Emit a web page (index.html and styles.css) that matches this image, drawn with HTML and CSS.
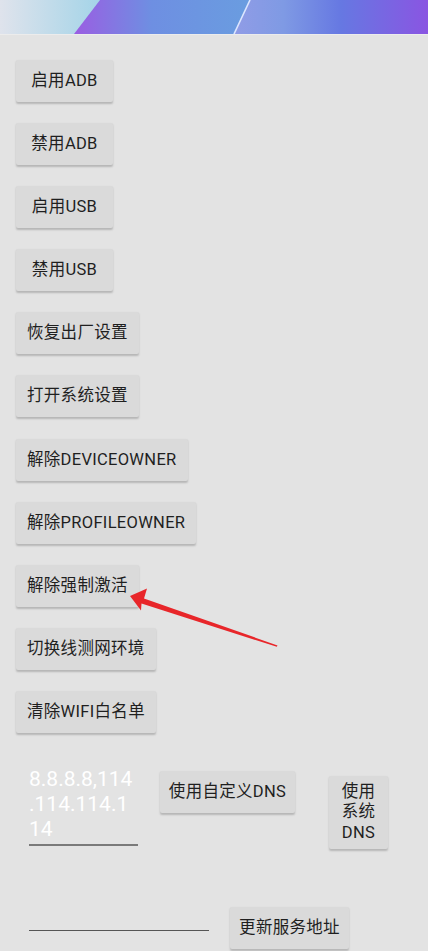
FILE: index.html
```html
<!DOCTYPE html>
<html lang="zh-CN">
<head>
<meta charset="utf-8">
<meta name="viewport" content="width=device-width, initial-scale=1">
<title>设置</title>
<link rel="stylesheet" href="styles.css">
</head>
<body>
<header class="banner">
  <svg class="banner-art" width="428" height="34" viewBox="0 0 428 34" preserveAspectRatio="none" aria-hidden="true">
    <defs>
      <linearGradient id="gl" x1="0" y1="0" x2="100" y2="0" gradientUnits="userSpaceOnUse">
        <stop offset="0" stop-color="#dfe3ec"/>
        <stop offset="1" stop-color="#a4d4e8"/>
      </linearGradient>
      <linearGradient id="gm" x1="75" y1="0" x2="245" y2="0" gradientUnits="userSpaceOnUse">
        <stop offset="0" stop-color="#9a5ee2"/>
        <stop offset="0.45" stop-color="#6e8fe2"/>
        <stop offset="1" stop-color="#6a9ce0"/>
      </linearGradient>
      <linearGradient id="gr" x1="235" y1="0" x2="428" y2="0" gradientUnits="userSpaceOnUse">
        <stop offset="0" stop-color="#909ce6"/>
        <stop offset="0.25" stop-color="#7f9ae4"/>
        <stop offset="0.55" stop-color="#6678e2"/>
        <stop offset="1" stop-color="#8a55e2"/>
      </linearGradient>
    </defs>
    <rect x="0" y="0" width="428" height="34" fill="url(#gl)"/>
    <polygon points="100,0 250,0 234,34 74,34" fill="url(#gm)"/>
    <polygon points="250,0 428,0 428,34 234,34" fill="url(#gr)"/>
    <line x1="250" y1="0" x2="234" y2="34" stroke="#dce6ff" stroke-width="1.6"/>
  </svg>
</header>

<main class="content">
  <div class="btn-list">
    <button class="btn">启用ADB</button>
    <button class="btn">禁用ADB</button>
    <button class="btn">启用USB</button>
    <button class="btn">禁用USB</button>
    <button class="btn">恢复出厂设置</button>
    <button class="btn">打开系统设置</button>
    <button class="btn">解除DEVICEOWNER</button>
    <button class="btn">解除PROFILEOWNER</button>
    <button class="btn">解除强制激活</button>
    <button class="btn">切换线测网环境</button>
    <button class="btn">清除WIFI白名单</button>
  </div>

  <div class="dns-row">
    <div class="field field-dns">8.8.8.8,114<wbr>.114.114.1<wbr>14</div>
    <button class="btn btn-custom-dns">使用自定义DNS</button>
    <button class="btn btn-sys-dns">使用<br>系统<br>DNS</button>
  </div>

  <div class="server-row">
    <div class="field field-server"></div>
    <button class="btn btn-server">更新服务地址</button>
  </div>
</main>

<svg class="annot" width="428" height="951" viewBox="0 0 428 951" aria-hidden="true">
  <polygon points="130,596 147,588.5 144,598.5 277.5,645.4 276.8,646.8 141.5,603.5 141,610.5" fill="#e8262a"/>
</svg>
</body>
</html>
```

FILE: styles.css
```css
html, body {
  margin: 0;
  padding: 0;
}

body {
  width: 428px;
  height: 951px;
  overflow: hidden;
  background: #e3e3e3;
  font-family: "Roboto", "Noto Sans CJK SC", sans-serif;
  color: #1f1f1f;
  position: relative;
}

.banner {
  height: 34px;
  border-bottom: 1px solid #ececec;
  display: flex;
}

.banner-art {
  display: block;
  width: 428px;
  height: 34px;
}

.content {
  padding: 25px 0 0 16px;
}

.btn-list {
  display: flex;
  flex-direction: column;
  align-items: flex-start;
  gap: 21.1px;
}

.btn {
  font-family: inherit;
  font-size: 16.5px;
  letter-spacing: 0.3px;
  color: #1f1f1f;
  background: #dadada;
  border: none;
  border-radius: 2px;
  box-shadow: 0 1.5px 2px rgba(0, 0, 0, 0.2);
  height: 42px;
  min-width: 97px;
  padding: 0 11px;
  margin: 0;
  display: flex;
  align-items: center;
  justify-content: center;
  line-height: 20px;
  white-space: nowrap;
}

.dns-row {
  display: flex;
  align-items: flex-start;
  margin-top: 34px;
  padding-left: 13px;
}

.field {
  color: #ffffff;
  font-size: 21px;
  line-height: 25px;
}

.field-dns {
  width: 109px;
  padding-bottom: 2px;
  border-bottom: 2px solid #7a7a7a;
  overflow-wrap: normal;
}

.btn-custom-dns {
  margin-left: 22px;
  margin-top: 4px;
  width: 135px;
  padding: 0;
}

.btn-sys-dns {
  margin-left: 34px;
  margin-top: 9px;
  width: 59px;
  min-width: 59px;
  height: 73px;
  padding: 0;
  white-space: normal;
  text-align: center;
  line-height: 20.5px;
}

.server-row {
  display: flex;
  align-items: flex-start;
  margin-top: 60px;
  padding-left: 13px;
}

.field-server {
  width: 180px;
  height: 21px;
  border-bottom: 1.5px solid #555555;
}

.btn-server {
  margin-left: 21px;
  margin-top: -2px;
  width: 119px;
  padding: 0;
}

.annot {
  position: absolute;
  left: 0;
  top: 0;
  pointer-events: none;
}
```
